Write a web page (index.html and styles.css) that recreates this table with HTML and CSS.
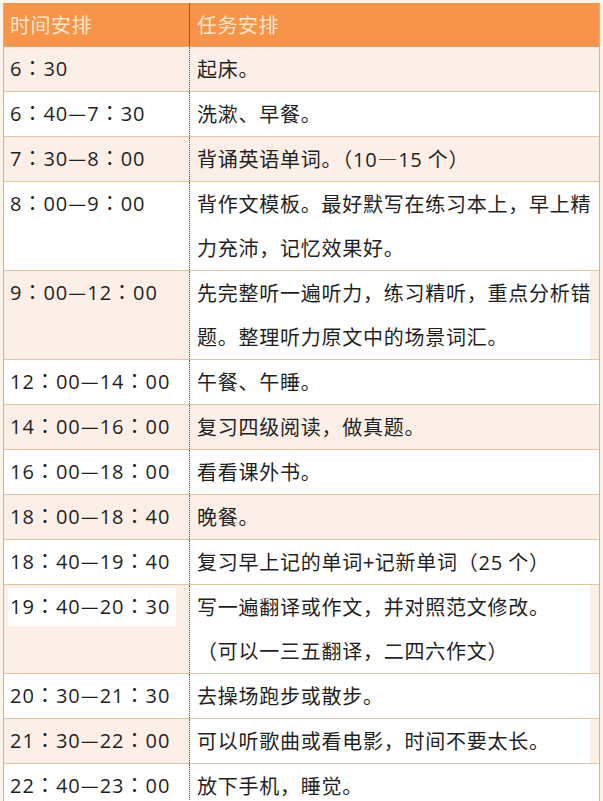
FILE: index.html
```html
<!DOCTYPE html>
<html lang="zh-CN">
<head>
<meta charset="utf-8">
<title>时间安排</title>
<link rel="stylesheet" href="styles.css">
</head>
<body>
<div class="table">
  <div class="row head"><div class="c1">时间安排</div><div class="c2">任务安排</div></div>
  <div class="row alt"><div class="c1 t">6<span class="p">：</span>30</div><div class="c2">起床。</div></div>
  <div class="row"><div class="c1 t">6<span class="p">：</span>40<span class="p">—</span>7<span class="p">：</span>30</div><div class="c2">洗漱、早餐。</div></div>
  <div class="row alt"><div class="c1 t">7<span class="p">：</span>30<span class="p">—</span>8<span class="p">：</span>00</div><div class="c2">背诵英语单词。<span class="p">（</span><span class="n">10</span>—<span class="n">15</span> 个<span class="p">）</span></div></div>
  <div class="row"><div class="c1 t">8<span class="p">：</span>00<span class="p">—</span>9<span class="p">：</span>00</div><div class="c2">背作文模板。最好默写在练习本上<span class="p">，</span>早上精力充沛<span class="p">，</span>记忆效果好。</div></div>
  <div class="row alt"><div class="c1 t">9<span class="p">：</span>00<span class="p">—</span>12<span class="p">：</span>00</div><div class="c2 white">先完整听一遍听力<span class="p">，</span>练习精听<span class="p">，</span>重点分析错题。整理听力原文中的场景词汇。</div></div>
  <div class="row"><div class="c1 t">12<span class="p">：</span>00<span class="p">—</span>14<span class="p">：</span>00</div><div class="c2">午餐、午睡。</div></div>
  <div class="row alt"><div class="c1 t">14<span class="p">：</span>00<span class="p">—</span>16<span class="p">：</span>00</div><div class="c2">复习四级阅读<span class="p">，</span>做真题。</div></div>
  <div class="row"><div class="c1 t">16<span class="p">：</span>00<span class="p">—</span>18<span class="p">：</span>00</div><div class="c2">看看课外书。</div></div>
  <div class="row alt"><div class="c1 t">18<span class="p">：</span>00<span class="p">—</span>18<span class="p">：</span>40</div><div class="c2">晚餐。</div></div>
  <div class="row"><div class="c1 t">18<span class="p">：</span>40<span class="p">—</span>19<span class="p">：</span>40</div><div class="c2">复习早上记的单词+记新单词<span class="p">（</span><span class="n">25</span> 个<span class="p">）</span></div></div>
  <div class="row alt"><div class="c1 t"><span class="hl">19<span class="p">：</span>40<span class="p">—</span>20<span class="p">：</span>30</span></div><div class="c2 white">写一遍翻译或作文<span class="p">，</span>并对照范文修改。<br><span class="p">（</span>可以一三五翻译<span class="p">，</span>二四六作文<span class="p">）</span></div></div>
  <div class="row"><div class="c1 t">20<span class="p">：</span>30<span class="p">—</span>21<span class="p">：</span>30</div><div class="c2">去操场跑步或散步。</div></div>
  <div class="row alt"><div class="c1 t">21<span class="p">：</span>30<span class="p">—</span>22<span class="p">：</span>00</div><div class="c2 white">可以听歌曲或看电影<span class="p">，</span>时间不要太长。</div></div>
  <div class="row"><div class="c1 t">22<span class="p">：</span>40<span class="p">—</span>23<span class="p">：</span>00</div><div class="c2">放下手机<span class="p">，</span>睡觉。</div></div>
</div>
</body>
</html>
```

FILE: styles.css
```css
html, body {
  margin: 0;
  padding: 0;
}
body {
  background: #fbf3e7;
  font-family: "Noto Sans CJK SC", "Microsoft YaHei", sans-serif;
  color: #1f1f1f;
  font-size: 20px;
  letter-spacing: 0.5px;
}
.table {
  margin: 3px 0 0 3px;
  width: 597px;
  box-sizing: border-box;
  border-left: 1px solid #cdb692;
  border-right: 1px solid #cdb692;
  background: #ffffff;
}
.row {
  display: grid;
  grid-template-columns: 186px 1fr;
  border-bottom: 1px solid #dcc5a3;
  background: #ffffff;
}
.row.alt {
  background: #fcefe8;
}
.row.head {
  background: #f7944a;
  color: #fde6c9;
  border-bottom: 1px solid #e0a070;
}
.c1 {
  box-sizing: border-box;
  padding: 0 0 0 6px;
  line-height: 44px;
  border-right: 1px dotted #5a5a5a;
  white-space: nowrap;
}
.head .c1 {
  border-right: 1px solid #8a5a36;
  line-height: 43px;
}
.c2 {
  padding: 0 4px 0 7px;
  line-height: 44px;
  letter-spacing: 0.75px;
}
.head .c2 {
  line-height: 43px;
  letter-spacing: 0.5px;
}
.c2.white {
  background: linear-gradient(to right, #ffffff 0, #ffffff 400px, #fcefe8 400px);
}
.c1.t {
  font-family: "Open Sans", "Noto Sans CJK SC", sans-serif;
  letter-spacing: 1px;
}
.p {
  font-family: "Noto Sans CJK TC", "Noto Sans CJK SC", sans-serif;
  line-height: 1;
}
.n {
  font-family: "Open Sans", sans-serif;
  line-height: 1;
}
.hl {
  display: inline-block;
  vertical-align: top;
  background: #ffffff;
  line-height: 38px;
  margin-top: 3px;
  padding-right: 6px;
  margin-left: -2px;
  padding-left: 2px;
}
```
